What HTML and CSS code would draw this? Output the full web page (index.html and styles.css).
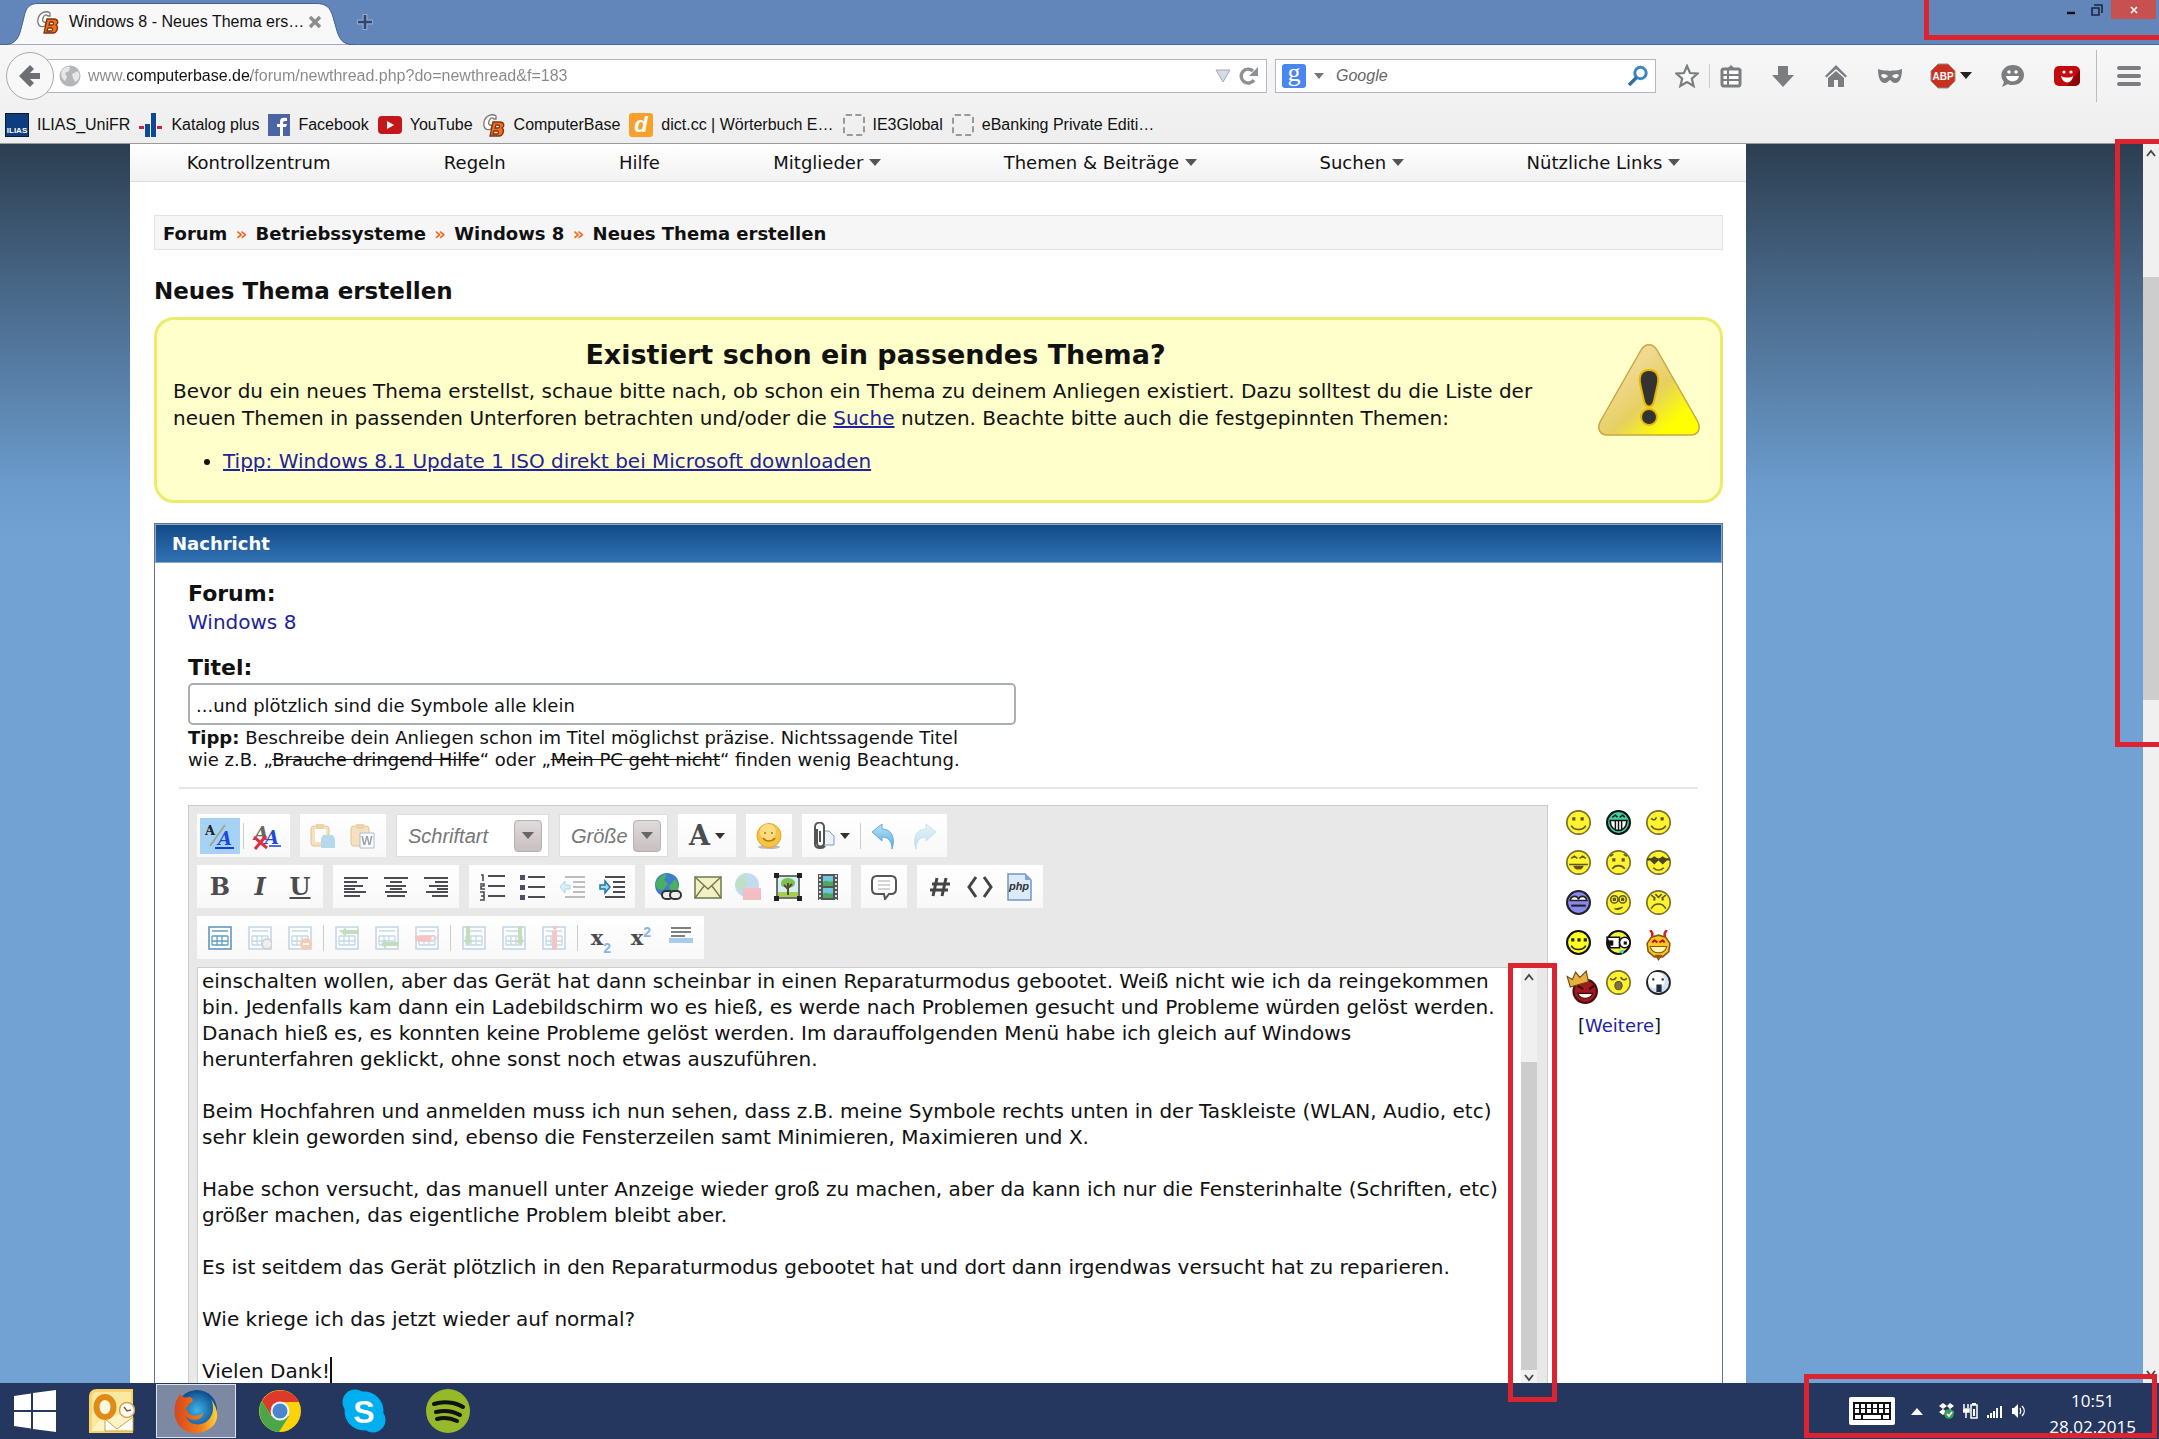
FILE: index.html
```html
<!DOCTYPE html>
<html lang="de">
<head>
    <meta charset="UTF-8">
    <meta name="viewport" content="width=device-width, initial-scale=1.0">
    <title>Windows 8 - Neues Thema erstellen</title>
    <link rel="stylesheet" href="styles.css">
</head>
<body>

    <!-- shared shapes -->
    <svg class="defs" aria-hidden="true">
        <defs>
            <linearGradient id="warnFill" x1="0" y1="0" x2="1" y2="1">
                <stop offset="0.3" stop-color="#f0d890"/>
                <stop offset="0.55" stop-color="#e6d060"/>
                <stop offset="0.8" stop-color="#ffff00"/>
            </linearGradient>
            <linearGradient id="arrowBlue" x1="0" y1="0" x2="0" y2="1">
                <stop offset="0" stop-color="#b8e4f8"/>
                <stop offset="1" stop-color="#5aa8d8"/>
            </linearGradient>
            <radialGradient id="foxGlobe">
                <stop offset="0" stop-color="#3fb4e8"/>
                <stop offset="1" stop-color="#0b4a8c"/>
            </radialGradient>
            <linearGradient id="foxFur" x1="0" y1="0" x2="1" y2="0">
                <stop offset="0" stop-color="#d8451c"/>
                <stop offset="0.6" stop-color="#ef7a1c"/>
                <stop offset="1" stop-color="#fbd437"/>
            </linearGradient>
            <symbol id="cb" viewBox="0 0 24 24">
                <path d="M14 3C10 0 3 3 2 9s2 9 7 7l1-4c-3 1-4-1-3-4s3-4 5-2l2 0z" fill="#fff" stroke="#777" stroke-width="1.3"/>
                <path d="M11 9h7c4 0 5 4 2 6 3 2 1 8-3 8H8zM14 12l-1 3h3c2 0 2-3 0-3zM12 18l-1 3h4c2 0 2-3 0-3z" fill="#f0701c" stroke="#7a3510" stroke-width="1.3"/>
            </symbol>
            <symbol id="face" viewBox="0 0 24 24">
                <circle cx="12" cy="12" r="11.2" fill="#fff22e" stroke="#77702a" stroke-width="1.6"/>
            </symbol>
            <symbol id="grid" viewBox="0 0 24 24">
                <path d="M1 1h22v22H1z" fill="#fff" stroke="#5a8fc0" stroke-width="1.5"/>
                <path d="M4 5h16M4 10h16M4 15h16M4 19h16M4 10v9M9 10v9M14 10v9M20 10v9" fill="none" stroke="#5f9ec4" stroke-width="1.3"/>
            </symbol>
        </defs>
    </svg>

    <header class="browser">
        <div class="titlebar">
            <svg class="tab-shape" viewBox="0 0 356 42" aria-hidden="true">
                <path d="M0 42C14 42 18 38 21 26L24 14C26 4 30 0.5 38 0.5H316C326 0.5 330 4 333 14L337 28C340 38 344 42 356 42z" fill="#f8f8f8" stroke="#42608f"/>
            </svg>
            <a class="tab" href="#">
                <svg class="ico24" viewBox="0 0 24 24"><use href="#cb"/></svg>
                <span>Windows 8 - Neues Thema ers…</span>
            </a>
            <button class="tab-close" aria-label="Tab schließen">
                <svg width="14" height="14" viewBox="0 0 14 14"><path d="M2 2l10 10M12 2L2 12" stroke="#8c8c8c" stroke-width="3.4"/></svg>
            </button>
            <button class="tab-new" aria-label="Neuer Tab">
                <svg width="18" height="18" viewBox="0 0 18 18"><path d="M9 1v16M1 9h16" stroke="#8fa9d4" stroke-width="5"/><path d="M9 2v14M2 9h14" stroke="#33476b" stroke-width="2.6"/></svg>
            </button>
            <div class="window-buttons">
                <button aria-label="Minimieren"><svg width="12" height="12" viewBox="0 0 12 12"><path d="M2 9h8" stroke="#111" stroke-width="2.4"/></svg></button>
                <button aria-label="Verkleinern"><svg width="12" height="12" viewBox="0 0 12 12"><path d="M1 4h7v7H1zM3 1h8v8" fill="none" stroke="#1a2742" stroke-width="1.6"/></svg></button>
                <button class="close" aria-label="Schließen"><svg width="10" height="10" viewBox="0 0 10 10"><path d="M2 2l6 6M8 2L2 8" stroke="#fff" stroke-width="1.6"/></svg></button>
            </div>
        </div>

        <div class="toolbar">
            <button class="back" aria-label="Zurück">
                <svg width="24" height="24" viewBox="0 0 24 24"><path d="M12 1l4 4-4 4h10v6H12l4 4-4 4L1 12z" fill="#6d6f73"/></svg>
            </button>
            <div class="url">
                <svg width="22" height="22" viewBox="0 0 22 22"><circle cx="11" cy="11" r="10.5" fill="#b4b6b8"/><path d="M3 5c3-3 6-4 8-3l-1 4-4 2 2 4-2 4c-3-2-5-7-3-11zM13 9l6-3c2 3 2 6 0 9l-3 2-2-4z" fill="#e6e7e8"/></svg>
                <input type="text" aria-label="Adresse" value="www.computerbase.de/forum/newthread.php?do=newthread&amp;f=183">
                <svg width="16" height="14" viewBox="0 0 16 14"><path d="M1 1h14L8 13z" fill="#d6dae2" stroke="#a3a9b6"/></svg>
                <button aria-label="Neu laden">
                    <svg width="22" height="20" viewBox="0 0 22 20"><path d="M16 14a7 7 0 1 1-1-9" fill="none" stroke="#8d9095" stroke-width="3.4"/><path d="M20 1v9h-9z" fill="#8d9095"/></svg>
                </button>
            </div>
            <div class="search">
                <span class="g-logo">g</span>
                <svg width="10" height="6" viewBox="0 0 10 6"><path d="M0 0h10L5 6z" fill="#777"/></svg>
                <input type="search" aria-label="Suche" placeholder="Google">
                <svg width="22" height="22" viewBox="0 0 22 22"><circle cx="13.500" cy="8" r="5.700" fill="#fff" stroke="#3f86bf" stroke-width="3"/><path d="M9.500 12.500L2 20" stroke="#2f6da6" stroke-width="3.400"/></svg>
            </div>
            <div class="tools">
                <button aria-label="Lesezeichen"><svg width="24" height="24" viewBox="0 0 24 24"><path d="M12 2l3 7 7.500.6-5.700 5 1.800 7.400-6.600-4-6.600 4 1.800-7.400-5.700-5L9 9z" fill="#fff" stroke="#7b7d80" stroke-width="2.200"/></svg></button>
                <span class="thin"></span>
                <button aria-label="Lesezeichenliste"><svg width="22" height="24" viewBox="0 0 22 24"><path d="M3 5h16a2 2 0 0 1 1 1v14a2 2 0 0 1-1 2H3a2 2 0 0 1-1-2V6a2 2 0 0 1 1-1z" fill="#fff" stroke="#7b7d80" stroke-width="3"/><path d="M7 5l4-4 4 4zM3 10h16v2H3zM3 15h16v2H3zM7 6h2v15H7z" fill="#7b7d80"/></svg></button>
                <button class="g1" aria-label="Downloads"><svg width="22" height="24" viewBox="0 0 22 24"><path d="M6 2h10v9h6L11 23 0 11h6z" fill="#7b7d80"/></svg></button>
                <button class="g1" aria-label="Startseite"><svg width="24" height="24" viewBox="0 0 24 24"><path d="M12 1l11 11-1.500 1.500L12 5l-9.500 8.500L1 12zM12 7l8 7v9h-6v-7h-4v7H4v-9z" fill="#7b7d80"/></svg></button>
                <button class="g1" aria-label="Privater Modus"><svg width="24" height="16" viewBox="0 0 24 16"><path fill-rule="evenodd" d="M0 1c4 2 9 1 12 2 3-1 8 0 12-2 0 8-2 14-7 14-3 0-4-3-5-3s-2 3-5 3C2 15 0 9 0 1zM3 7c1 4 5 4 7 1-2-2-5-3-7-1zM21 7c-1 4-5 4-7 1 2-2 5-3 7-1z" fill="#7b7d80"/></svg></button>
                <button class="g1 abp" aria-label="Adblock Plus"><svg width="26" height="26" viewBox="0 0 26 26"><path d="M8 1h10l7 7v10l-7 7H8l-7-7V8z" fill="#c8301f" stroke="#9b8884"/><text x="13" y="17" text-anchor="middle" class="abp-text">ABP</text></svg><svg width="12" height="7" viewBox="0 0 12 7"><path d="M0 0h12L6 7z" fill="#222"/></svg></button>
                <button class="g1" aria-label="Chat"><svg width="24" height="24" viewBox="0 0 24 24"><path d="M13 1c6 0 11 4 11 10s-5 10-11 10c-2 0-4 0-5-1l-6 3 2-5C-2 11 3 1 13 1z" fill="#7b7d80"/><circle cx="9" cy="8" r="1.800" fill="#fff"/><circle cx="16" cy="8" r="1.800" fill="#fff"/><path d="M6 12h13c-1 7-12 7-13 0z" fill="#fff"/></svg></button>
                <button class="g1" aria-label="YouTube Erweiterung"><svg width="26" height="20" viewBox="0 0 26 20"><rect x="0" y="0" width="26" height="20" rx="5" fill="#c20a10"/><path d="M13 20h8a5 5 0 0 0 5-5V4z" fill="#8e0004"/><circle cx="10" cy="6" r="1.600" fill="#fff"/><circle cx="17" cy="6" r="1.600" fill="#fff"/><path d="M7 10c4 2 9 2 12 0-1 8-10 9-12 0z" fill="#fff"/></svg></button>
                <span class="tall"></span>
                <button aria-label="Menü"><svg width="24" height="20" viewBox="0 0 24 20"><path d="M2 2h20M2 10h20M2 18h20" stroke="#7b7d80" stroke-width="4" stroke-linecap="round"/></svg></button>
            </div>
        </div>

        <nav class="bookmarks">
            <a href="#"><svg class="ico24" viewBox="0 0 24 24"><path d="M0 0h24v24H0z" fill="#0d1a33"/><path d="M1 1h22v22H1z" fill="#0d3c80"/><text x="12" y="20" text-anchor="middle" class="ilias">ILIAS</text></svg>ILIAS_UniFR</a>
            <a href="#"><svg class="ico24" viewBox="0 0 24 24"><path d="M12 0h5v24h-5zM6 11h5v13H6z" fill="#0d4a94"/><path d="M0 13h5v3H0zM18 13h5v3h-5z" fill="#cc2244"/></svg>Katalog plus</a>
            <a href="#"><svg class="ico22" viewBox="0 0 22 22"><path d="M0 0h22v22H0z" fill="#4a64a4"/><path d="M12 22v-9H9v-3h3V8c0-4 2-5 7-4v3c-3 0-4 0-4 2v1h4l-1 3h-3v9z" fill="#fff"/></svg>Facebook</a>
            <a href="#"><svg class="ico24" viewBox="0 0 24 24"><rect y="3" width="24" height="18" rx="4" fill="#c4171c"/><path d="M9 8l7 4-7 4z" fill="#fff"/></svg>YouTube</a>
            <a href="#"><svg class="ico24" viewBox="0 0 24 24"><use href="#cb"/></svg>ComputerBase</a>
            <a href="#"><svg class="ico24" viewBox="0 0 24 24"><rect width="24" height="24" rx="3" fill="#f9a02c"/><text x="12" y="19" text-anchor="middle" class="dict">d</text></svg>dict.cc | Wörterbuch E…</a>
            <a href="#"><span class="no-icon"></span>IE3Global</a>
            <a href="#"><span class="no-icon"></span>eBanking Private Editi…</a>
        </nav>
    </header>

    <div class="viewport">
        <main class="page">
            <nav class="sitenav">
                <a href="#">Kontrollzentrum</a>
                <a href="#">Regeln</a>
                <a href="#">Hilfe</a>
                <a class="drop" href="#">Mitglieder</a>
                <a class="drop" href="#">Themen &amp; Beiträge</a>
                <a class="drop" href="#">Suchen</a>
                <a class="drop" href="#">Nützliche Links</a>
            </nav>

            <div class="content">
                <div class="breadcrumb">
                    <a href="#">Forum</a> <i>»</i> <a href="#">Betriebssysteme</a> <i>»</i> <a href="#">Windows 8</a> <i>»</i> <span>Neues Thema erstellen</span>
                </div>

                <h1>Neues Thema erstellen</h1>

                <section class="notice">
                    <div class="notice-text">
                        <h2>Existiert schon ein passendes Thema?</h2>
                        <p>Bevor du ein neues Thema erstellst, schaue bitte nach, ob schon ein Thema zu deinem Anliegen existiert. Dazu solltest du die Liste der neuen Themen in passenden Unterforen betrachten und/oder die <a href="#">Suche</a> nutzen. Beachte bitte auch die festgepinnten Themen:</p>
                        <ul>
                            <li><a href="#">Tipp: Windows 8.1 Update 1 ISO direkt bei Microsoft downloaden</a></li>
                        </ul>
                    </div>
                    <svg width="102" height="94" viewBox="0 0 102 94" aria-hidden="true">
                        <path d="M43 6c4-7 12-7 16 0l41 72c3 7 0 13-7 13H9c-7 0-10-6-7-13z" fill="url(#warnFill)" stroke="#c9a640" stroke-width="1.500"/>
                        <path d="M51 27c-7 0-9 5-8 12l4 18c2 6 6 6 8 0l4-18c1-7-1-12-8-12z" fill="#333" stroke="#e8b800" stroke-width="4" paint-order="stroke"/>
                        <circle cx="51" cy="73" r="7" fill="#333" stroke="#e8b800" stroke-width="4" paint-order="stroke"/>
                    </svg>
                </section>

                <form class="panel">
                    <h3>Nachricht</h3>
                    <div class="panel-body">
                        <div class="fields">
                            <div class="label">Forum:</div>
                            <a class="forum-link" href="#">Windows 8</a>
                            <label class="label" for="title">Titel:</label>
                            <input class="title-input" type="text" id="title" value="...und plötzlich sind die Symbole alle klein">
                            <p class="hint"><b>Tipp:</b> Beschreibe dein Anliegen schon im Titel möglichst präzise. Nichtssagende Titel<br>wie z.B. „<s>Brauche dringend Hilfe</s>“ oder „<s>Mein PC geht nicht</s>“ finden wenig Beachtung.</p>
                        </div>
                        <hr>

                        <div class="compose">
                            <div class="editor">
                                <div class="row">
                                    <div class="group">
                                        <button type="button" class="active" aria-label="Editor wechseln"><svg width="32" height="28" viewBox="0 0 32 28"><text x="1" y="13" class="a-small">A</text><text x="14" y="23" class="a-blue">A</text><path d="M6 24L21 3" stroke="#a0a890" stroke-width="2"/><path d="M11 26h19" stroke="#1540d8" stroke-width="2"/></svg></button>
                                        <i class="sep"></i>
                                        <button type="button" aria-label="Formatierung entfernen"><svg width="32" height="30" viewBox="0 0 32 30"><text x="3" y="19" class="a-grey">A</text><text x="14" y="23" class="a-blue">A</text><path d="M3 16l13 11M15 15L4 28" stroke="#e03040" stroke-width="3"/><path d="M18 25h12" stroke="#1540d8" stroke-width="1.500"/></svg></button>
                                    </div>
                                    <div class="group faded">
                                        <button type="button" aria-label="Einfügen"><svg width="26" height="26" viewBox="0 0 26 26"><rect x="1" y="3" width="18" height="20" rx="3" fill="#f4cf98" stroke="#d49c58"/><rect x="5" y="6" width="11" height="13" fill="#fff"/><path d="M6 1h8v5H6z" fill="#e0b878"/><path d="M13 12h10l2 4v9H11v-9z" fill="#8cc4e4"/></svg></button>
                                        <button type="button" aria-label="Aus Word einfügen"><svg width="26" height="26" viewBox="0 0 26 26"><rect x="1" y="3" width="18" height="20" rx="3" fill="#f4cf98" stroke="#d49c58"/><path d="M6 1h8v5H6z" fill="#e0b878"/><path d="M10 10h14v15H10z" fill="#fff" stroke="#7f92bb"/><text x="17" y="22" text-anchor="middle" class="word">W</text></svg></button>
                                    </div>
                                    <div class="group combo font-combo"><select aria-label="Schriftart"><option>Schriftart</option></select><span class="knob"></span></div>
                                    <div class="group combo size-combo"><select aria-label="Größe"><option>Größe</option></select><span class="knob"></span></div>
                                    <div class="group"><button type="button" class="wide letter" aria-label="Textfarbe">A<span class="tri"></span></button></div>
                                    <div class="group"><button type="button" aria-label="Smiley"><svg width="26" height="26" viewBox="0 0 26 26"><ellipse cx="13" cy="24" rx="11" ry="2" fill="#bbb"/><circle cx="13" cy="12.500" r="12" fill="#f6c445" stroke="#e2a52c"/><circle cx="12" cy="9" r="8" fill="#fbdc80"/><path d="M7 15c3 4 9 4 12 0M9 9v2M16 9v2" fill="none" stroke="#b17a18" stroke-width="1.600"/></svg></button></div>
                                    <div class="group">
                                        <button type="button" class="wide" aria-label="Anhang"><svg width="22" height="28" viewBox="0 0 22 28"><path d="M11 9h5l5 5v9H11z" fill="#edf2fa" stroke="#7b9abf"/><path d="M4 7v14a3 3 0 0 0 7 0V5a4 4 0 0 0-9 0v17c0 5 8 5 10 2M7 9v11" fill="none" stroke="#555" stroke-width="2"/></svg><span class="tri"></span></button>
                                        <i class="sep"></i>
                                        <button type="button" aria-label="Rückgängig"><svg width="26" height="28" viewBox="0 0 26 28"><path d="M1 10l10-8v5c9 0 14 8 10 20 0-8-4-12-10-12v4z" fill="url(#arrowBlue)" stroke="#63aede"/></svg></button>
                                        <button type="button" class="pale" aria-label="Wiederherstellen"><svg width="26" height="28" viewBox="0 0 26 28"><path d="M25 10L15 2v5C6 7 1 15 5 27c0-8 4-12 10-12v4z" fill="url(#arrowBlue)" stroke="#63aede"/></svg></button>
                                    </div>
                                </div>

                                <div class="row">
                                    <div class="group letters">
                                        <button type="button" aria-label="Fett"><b>B</b></button>
                                        <button type="button" aria-label="Kursiv"><em>I</em></button>
                                        <button type="button" aria-label="Unterstrichen"><u>U</u></button>
                                    </div>
                                    <div class="group">
                                        <button type="button" aria-label="Linksbündig"><svg width="24" height="20" viewBox="0 0 24 20"><path d="M0 1h24M0 5h13M0 9h19M0 12h11M0 15h22M0 19h16" stroke="#4b4b50" stroke-width="2"/></svg></button>
                                        <button type="button" aria-label="Zentriert"><svg width="24" height="20" viewBox="0 0 24 20"><path d="M0 1h24M6 5h12M2 9h20M6 12h12M1 15h22M3 19h18" stroke="#4b4b50" stroke-width="2"/></svg></button>
                                        <button type="button" aria-label="Rechtsbündig"><svg width="24" height="20" viewBox="0 0 24 20"><path d="M0 1h24M11 5h13M5 9h19M13 12h11M2 15h22M8 19h16" stroke="#4b4b50" stroke-width="2"/></svg></button>
                                    </div>
                                    <div class="group">
                                        <button type="button" aria-label="Nummerierte Liste"><svg width="26" height="28" viewBox="0 0 26 28"><path d="M9 3h17M9 13h17M9 23h17" stroke="#4b4b50" stroke-width="2"/><path d="M2 2h2v6M1 11h4v2H2v3h4M1 19h4v8H1M2 23h3" fill="none" stroke="#4b4b50" stroke-width="1.600"/></svg></button>
                                        <button type="button" aria-label="Liste"><svg width="26" height="26" viewBox="0 0 26 26"><path d="M9 3h17M9 13h17M9 23h17" stroke="#4b4b50" stroke-width="2"/><path d="M1 1h5v5H1zM1 11h5v5H1zM1 21h5v5H1z" fill="#4d4f68"/></svg></button>
                                        <button type="button" class="pale" aria-label="Einzug verkleinern"><svg width="26" height="24" viewBox="0 0 26 24"><path d="M6 2h20M14 7h12M14 12h12M14 17h12M6 22h20" stroke="#4b4b50" stroke-width="2"/><path d="M1 12l5-6v4h5v4H6v4z" fill="#9fdcf4" stroke="#2f8ab8"/></svg></button>
                                        <button type="button" aria-label="Einzug vergrößern"><svg width="26" height="24" viewBox="0 0 26 24"><path d="M6 2h20M14 7h12M14 12h12M14 17h12M6 22h20" stroke="#4b4b50" stroke-width="2"/><path d="M11 12L6 6v4H1v4h5v4z" fill="#9fdcf4" stroke="#1f78a8" stroke-width="1.500"/></svg></button>
                                    </div>
                                    <div class="group">
                                        <button type="button" aria-label="Link"><svg width="28" height="28" viewBox="0 0 28 28"><circle cx="13" cy="12" r="12" fill="#3f7fc8"/><path d="M1 12c2-7 8-11 12-11l-3 6 4 4-5 6-5-1zM15 13l6-7c4 4 4 9 2 13l-6-1z" fill="#48b060"/><rect x="8" y="18" width="11" height="8" rx="4" fill="#eee" stroke="#333" stroke-width="2"/><rect x="16" y="18" width="11" height="8" rx="4" fill="#eee" stroke="#333" stroke-width="2"/></svg></button>
                                        <button type="button" aria-label="E-Mail"><svg width="28" height="24" viewBox="0 0 28 24"><path d="M1 2h26v21H1z" fill="#f3f0c4" stroke="#6f7750" stroke-width="1.500"/><path d="M1 2l13 12L27 2M1 23l9-12M27 23l-9-12" fill="none" stroke="#6f7750" stroke-width="1.300"/></svg></button>
                                        <button type="button" class="pale" aria-label="Link entfernen"><svg width="28" height="28" viewBox="0 0 28 28"><circle cx="13" cy="12" r="12" fill="#5f9fd8"/><path d="M1 12c2-7 8-11 12-11l-3 6 4 4-5 6-5-1z" fill="#48b060"/><path d="M9 15h18v12H9z" fill="#e85060"/></svg></button>
                                        <button type="button" aria-label="Grafik"><svg width="28" height="28" viewBox="0 0 28 28"><path d="M3 3h22v22H3z" fill="#d4f0f4" stroke="#444" stroke-width="1.500"/><path d="M4 19h20v5H4z" fill="#a8cc50"/><path d="M7 11c0-4 3-6 7-6s8 3 7 6-4 4-7 3-7 1-7-3z" fill="#7fbf5a"/><path d="M14 10v12M14 16l-4-4M14 15l4-4" stroke="#5a4a28" stroke-width="2"/><path d="M0 0h5v5H0zM23 0h5v5h-5zM0 23h5v5H0zM23 23h5v5h-5z" fill="#222"/></svg></button>
                                        <button type="button" aria-label="Video"><svg width="22" height="26" viewBox="0 0 22 26"><path d="M1 0h20v26H1z" fill="#555"/><path d="M6 2h10v10H6zM6 14h10v10H6z" fill="#70c8e0"/><path d="M6 8c4-3 6 1 10-1v5H6zM6 20c4-3 6 1 10-1v5H6z" fill="#4ca860"/><path d="M3 1v25M19 1v25" stroke="#ddd" stroke-width="2" stroke-dasharray="2 2"/></svg></button>
                                    </div>
                                    <div class="group">
                                        <button type="button" aria-label="Zitat"><svg width="26" height="26" viewBox="0 0 26 26"><path d="M6 2h14c3 0 5 2 5 5v8c0 3-2 5-5 5h-2l-4 5-1-5H6c-3 0-5-2-5-5V7c0-3 2-5 5-5z" fill="#fff" stroke="#555" stroke-width="2"/><path d="M7 7h12M7 11h12M7 15h12" stroke="#aaa"/></svg></button>
                                    </div>
                                    <div class="group">
                                        <button type="button" aria-label="Code"><svg width="22" height="22" viewBox="0 0 22 22"><path d="M8 2L4 20M17 2l-4 18M3 8h18M1 14h18" stroke="#444" stroke-width="3"/></svg></button>
                                        <button type="button" aria-label="HTML"><svg width="26" height="22" viewBox="0 0 26 22"><path d="M9 1L2 11l7 10M17 1l7 10-7 10" fill="none" stroke="#444" stroke-width="3"/></svg></button>
                                        <button type="button" aria-label="PHP"><svg width="26" height="28" viewBox="0 0 26 28"><path d="M1 1h17l6 6v20H1z" fill="#dbe9f8" stroke="#6f97c4" stroke-width="1.500"/><path d="M18 1v6h6z" fill="#7fa6d4"/><text x="12" y="17" text-anchor="middle" class="php">php</text></svg></button>
                                    </div>
                                </div>

                                <div class="row">
                                    <div class="group tables">
                                        <button type="button" aria-label="Tabelle"><svg class="ico24"><use href="#grid"/></svg></button>
                                        <button type="button" class="pale" aria-label="Tabelleneigenschaften"><svg class="ico24" viewBox="0 0 24 24"><use href="#grid"/><circle cx="19" cy="18" r="5" fill="#ddd" stroke="#888" stroke-width="2"/></svg></button>
                                        <button type="button" class="pale" aria-label="Tabelle löschen"><svg class="ico24" viewBox="0 0 24 24"><use href="#grid"/><circle cx="18" cy="18" r="6" fill="#f07838"/><path d="M15 18h6" stroke="#fff" stroke-width="2"/></svg></button>
                                        <i class="sep"></i>
                                        <button type="button" class="pale" aria-label="Zeile davor"><svg class="ico24" viewBox="0 0 24 24"><use href="#grid"/><path d="M6 6l5-5v3h13v4H11v3z" fill="#58a848"/></svg></button>
                                        <button type="button" class="pale" aria-label="Zeile danach"><svg class="ico24" viewBox="0 0 24 24"><use href="#grid"/><path d="M6 18l5-5v3h13v4H11v3z" fill="#58a848"/></svg></button>
                                        <button type="button" class="pale" aria-label="Zeile löschen"><svg class="ico24" viewBox="0 0 24 24"><use href="#grid"/><path d="M0 10h16v5H0zM17 9l7 6M24 9l-7 6" fill="#f06060" stroke="#f06060"/></svg></button>
                                        <i class="sep"></i>
                                        <button type="button" class="pale" aria-label="Spalte davor"><svg class="ico24" viewBox="0 0 24 24"><use href="#grid"/><path d="M6 19l-5-5h3V0h4v14h3z" fill="#58a848"/></svg></button>
                                        <button type="button" class="pale" aria-label="Spalte danach"><svg class="ico24" viewBox="0 0 24 24"><use href="#grid"/><path d="M18 19l-5-5h3V0h4v14h3z" fill="#58a848"/></svg></button>
                                        <button type="button" class="pale" aria-label="Spalte löschen"><svg class="ico24" viewBox="0 0 24 24"><use href="#grid"/><path d="M10 5h5v19h-5zM9 0h7l-3 5z" fill="#f06060"/></svg></button>
                                        <i class="sep"></i>
                                        <button type="button" class="script low" aria-label="Tiefgestellt">x<small>2</small></button>
                                        <button type="button" class="script high" aria-label="Hochgestellt">x<small>2</small></button>
                                        <button type="button" aria-label="Linie"><svg class="ico24" viewBox="0 0 24 24"><path d="M2 2h20M2 6h20M2 10h14" stroke="#555" stroke-width="1.500"/><path d="M0 12h24v5H0z" fill="#a8ccf0"/></svg></button>
                                    </div>
                                </div>

                                <div class="writing">
                                    <textarea aria-label="Nachricht" wrap="off">einschalten wollen, aber das Gerät hat dann scheinbar in einen Reparaturmodus gebootet. Weiß nicht wie ich da reingekommen
bin. Jedenfalls kam dann ein Ladebildschirm wo es hieß, es werde nach Problemen gesucht und Probleme würden gelöst werden.
Danach hieß es, es konnten keine Probleme gelöst werden. Im darauffolgenden Menü habe ich gleich auf Windows
herunterfahren geklickt, ohne sonst noch etwas auszuführen.

Beim Hochfahren und anmelden muss ich nun sehen, dass z.B. meine Symbole rechts unten in der Taskleiste (WLAN, Audio, etc)
sehr klein geworden sind, ebenso die Fensterzeilen samt Minimieren, Maximieren und X.

Habe schon versucht, das manuell unter Anzeige wieder groß zu machen, aber da kann ich nur die Fensterinhalte (Schriften, etc)
größer machen, das eigentliche Problem bleibt aber.

Es ist seitdem das Gerät plötzlich in den Reparaturmodus gebootet hat und dort dann irgendwas versucht hat zu reparieren.

Wie kriege ich das jetzt wieder auf normal?

Vielen Dank!</textarea>
                                    <span class="caret"></span>
                                    <div class="scrollbar inner">
                                        <svg width="10" height="8" viewBox="0 0 10 8"><path d="M1 7l4-5 4 5" fill="none" stroke="#444" stroke-width="1.800"/></svg>
                                        <span class="thumb"></span>
                                        <svg width="10" height="8" viewBox="0 0 10 8"><path d="M1 1l4 5 4-5" fill="none" stroke="#444" stroke-width="1.800"/></svg>
                                    </div>
                                </div>
                            </div>

                            <div class="smileys">
                                <div class="smiley-grid">
                                    <svg viewBox="0 0 24 24"><use href="#face"/><path d="M6 7h3v3H6zM14 7h3v3h-3z" fill="#5a5524"/><path d="M5 15c3 5 11 5 14 0" fill="none" stroke="#5a5524" stroke-width="1.500"/></svg>
                                    <svg viewBox="0 0 24 24"><circle cx="12" cy="12" r="11" fill="#3fd0a0" stroke="#111" stroke-width="2"/><path d="M4 10h16c0 13-16 13-16 0z" fill="#fff" stroke="#111" stroke-width="1.500"/><path d="M9 10v9M12 10v10M15 10v9M6 7l3-2 2 2M13 7l3-2 2 2" fill="none" stroke="#111" stroke-width="1.400"/></svg>
                                    <svg viewBox="0 0 24 24"><use href="#face"/><path d="M14 7h3v3h-3z" fill="#5a5524"/><path d="M5 8c2 2 4 2 5-1M5 15c3 5 11 5 14 0" fill="none" stroke="#5a5524" stroke-width="1.500"/></svg>
                                    <svg viewBox="0 0 24 24"><use href="#face"/><path d="M5 8l3-2 3 2M13 8l3-2 3 2M3 14h18" fill="none" stroke="#5a5524" stroke-width="1.500"/><path d="M7 15h10c-1 5-9 5-10 0z" fill="#6a4a20"/></svg>
                                    <svg viewBox="0 0 24 24"><use href="#face"/><path d="M6 8h3v3H6zM15 8h3v3h-3z" fill="#5a5524"/><path d="M4 6l3-2M17 4l3 2M6 18c3-4 9-4 12 0" fill="none" stroke="#5a5524" stroke-width="1.500"/></svg>
                                    <svg viewBox="0 0 24 24"><use href="#face"/><path d="M1 8h22v2h-3l-4 4-4-4-4 4-4-4H1zM5 8l3-2 3 2zM13 8l3-2 3 2z" fill="#4a461f"/><path d="M7 17c3 3 7 3 10 0" fill="none" stroke="#5a5524" stroke-width="1.500"/></svg>
                                    <svg viewBox="0 0 24 24"><circle cx="12" cy="12" r="11" fill="#8888ee" stroke="#222" stroke-width="2"/><path d="M4 10c1-5 7-5 8-1 1-4 7-4 8 1z" fill="#fff" stroke="#222" stroke-width="1.500"/><path d="M5 15h14" stroke="#222" stroke-width="2"/></svg>
                                    <svg viewBox="0 0 24 24"><use href="#face"/><circle cx="8" cy="9" r="3.500" fill="none" stroke="#5a5524" stroke-width="1.500"/><circle cx="16" cy="9" r="3.500" fill="none" stroke="#5a5524" stroke-width="1.500"/><path d="M7 8h2v2H7zM15 8h2v2h-2zM8 18c3 1 6 1 8-2" fill="#5a5524" stroke="#5a5524"/></svg>
                                    <svg viewBox="0 0 24 24"><use href="#face"/><path d="M5 5l4 3M19 5l-4 3M9 4l3 3 3-3M5 18c3-6 11-6 14 0" fill="none" stroke="#5a5524" stroke-width="1.500"/><path d="M7 8h2v2H7zM15 8h2v2h-2z" fill="#5a5524"/></svg>
                                    <svg viewBox="0 0 24 24"><circle cx="12" cy="12" r="11" fill="#ffff20" stroke="#111" stroke-width="2"/><path d="M5 8h3v3H5zM11 8h3v3h-3zM17 8h3v3h-3z" fill="#222"/><path d="M5 15c3 5 11 5 14 0" fill="none" stroke="#222" stroke-width="1.500"/></svg>
                                    <svg viewBox="0 0 24 24"><circle cx="12" cy="12" r="11" fill="#f4f43c" stroke="#111" stroke-width="2"/><path d="M1 7h12v10H4z" fill="#fff" stroke="#111" stroke-width="1.500"/><path d="M1 10h6v5H1z" fill="#111"/><circle cx="18" cy="12" r="5" fill="#fff" stroke="#111" stroke-width="1.500"/><path d="M17 11h3v3h-3z" fill="#111"/><path d="M12 20l6-1-2 4z" fill="#40d8c0"/></svg>
                                    <svg class="devil" viewBox="0 0 24 30"><path d="M6 8V3L4 0M18 8V3l2-3" fill="none" stroke="#e02020" stroke-width="2.500"/><path d="M5 7l7-2 7 2 4 6-1 8-6 5H8l-6-5-1-8z" fill="#f8c820" stroke="#8a5410" stroke-width="1.500"/><path d="M6 12l2-2 3 2M13 12l3-2 2 2" fill="none" stroke="#c01010" stroke-width="2"/><path d="M4 16h16c-2 8-14 8-16 0z" fill="#fff8b0" stroke="#8a5410"/><path d="M8 24h8l-4 6z" fill="#a05810"/></svg>
                                    <svg class="king" viewBox="0 0 30 32"><circle cx="18" cy="20" r="11" fill="#a01820" stroke="#401010" stroke-width="2"/><path d="M1 6l5 3 3-7 4 5 6-6 2 10L4 16z" fill="#e8b040" stroke="#6a4410"/><path d="M11 15l5 3M26 15l-4 3" stroke="#300" stroke-width="2"/><path d="M11 22h14c-2 6-12 6-14 0z" fill="#fff" stroke="#400"/></svg>
                                    <svg viewBox="0 0 24 24"><use href="#face"/><path d="M4 8c2 2 4 2 6-1M14 7c2 3 4 3 6 1" fill="none" stroke="#5a5524" stroke-width="1.500"/><ellipse cx="12" cy="15" rx="3.500" ry="4" fill="#7a7250" stroke="#5a5524"/></svg>
                                    <svg viewBox="0 0 24 24"><circle cx="12" cy="12" r="11" fill="#d4e0f4" stroke="#222" stroke-width="1.800"/><circle cx="10" cy="10" r="8" fill="#fff"/><path d="M6 8h2v2H6zM15 8h2v2h-2zM10 14h5v7h-5z" fill="#1c2c40"/></svg>
                                </div>
                                <div class="more">[<a href="#">Weitere</a>]</div>
                            </div>
                        </div>
                    </div>
                </form>
            </div>
        </main>
        <div class="scrollbar outer">
            <svg width="10" height="8" viewBox="0 0 10 8"><path d="M1 7l4-5 4 5" fill="none" stroke="#444" stroke-width="1.800"/></svg>
            <span class="thumb"></span>
            <svg width="10" height="8" viewBox="0 0 10 8"><path d="M1 1l4 5 4-5" fill="none" stroke="#444" stroke-width="1.800"/></svg>
        </div>
    </div>

    <footer class="taskbar">
        <button aria-label="Start"><svg width="42" height="42" viewBox="0 0 42 42"><path d="M0 6l17-2.500V20H0zM19 3l23-3v20H19zM0 22h17v16.500L0 36zM19 22h23v20l-23-3z" fill="#fff"/></svg></button>
        <button aria-label="Outlook"><svg width="46" height="44" viewBox="0 0 46 44"><path d="M8 0h36v44H0V8C0 3 3 0 8 0z" fill="#f8d468"/><path d="M3 8c0-3 2-5 5-5h34v38H3z" fill="#fce9a0"/><path d="M2 42l14-16h28v16z" fill="#fff3c8"/><path d="M16 30l12 10 16-12v14H16z" fill="#fff" stroke="#d8a030"/><ellipse cx="16" cy="18" rx="8.500" ry="10" fill="#fff8e0" stroke="#e08a18" stroke-width="6"/><circle cx="38" cy="21" r="7.500" fill="#fff" stroke="#d8a048" stroke-width="1.500"/><path d="M35 18l3 4 4-1" fill="none" stroke="#8a5a20" stroke-width="1.500"/></svg></button>
        <button class="current" aria-label="Firefox"><svg width="44" height="44" viewBox="0 0 44 44"><circle cx="23" cy="21" r="20" fill="url(#foxGlobe)"/><path d="M2 12c2-3 3-5 4-7 2 3 5 4 9 3 3 0 5 3 3 5l-3 2c0 2-2 3-3 4 2 8 10 10 17 5-1 8-13 9-17 3 2 8 12 11 20 6 7-5 9-14 5-23 9 12 8 24-2 30C21 49 4 43 1 27c-1-6 0-11 1-15z" fill="url(#foxFur)"/></svg></button>
        <button aria-label="Chrome"><svg width="42" height="42" viewBox="0 0 42 42"><circle cx="21" cy="21" r="21" fill="#fcd209"/><path d="M3 11A21 21 0 0 1 40 12H21l-9 14z" fill="#dd3a2c"/><path d="M3 11A21 21 0 0 0 20 42l10-16H12z" fill="#4aa749"/><circle cx="21" cy="21" r="9.500" fill="#f4f4f4"/><circle cx="21" cy="21" r="7.500" fill="#4a86d0"/></svg></button>
        <button aria-label="Skype"><svg width="44" height="44" viewBox="0 0 44 44"><circle cx="22" cy="22" r="19.500" fill="#00aff0"/><circle cx="13" cy="13" r="12.500" fill="#00aff0"/><circle cx="31" cy="31" r="12.500" fill="#00aff0"/><text x="22" y="34" text-anchor="middle" class="skype">S</text></svg></button>
        <button aria-label="Spotify"><svg width="44" height="44" viewBox="0 0 44 44"><circle cx="22" cy="22" r="22" fill="#96b92a"/><path d="M8 15c9-3 21-2 29 3M10 23c8-2 17-1 24 3M11 30c7-2 14-1 20 2" fill="none" stroke="#111" stroke-width="4" stroke-linecap="round"/></svg></button>

        <div class="tray">
            <svg width="46" height="28" viewBox="0 0 46 28"><rect width="46" height="28" rx="2" fill="#fff"/><path d="M4 5h38v18H4z" fill="#111"/><path d="M6 9h34M6 14h34" stroke="#fff" stroke-width="4" stroke-dasharray="4 2"/><path d="M6 20h6M14 20h18M34 20h6" stroke="#fff" stroke-width="4"/></svg>
            <svg width="12" height="7" viewBox="0 0 12 7"><path d="M0 7h12L6 0z" fill="#fff"/></svg>
            <div class="tray-icons">
                <svg width="16" height="16" viewBox="0 0 16 16"><path d="M4 0l4 3-4 3-4-3zM11 0l4 3-4 3-3-3zM4 6l4 3-4 3-4-3zM11 6l4 3-4 3-3-3z" fill="#fff"/><circle cx="10" cy="11" r="4.800" fill="#38a050"/><path d="M8 11l2 2 3-4" fill="none" stroke="#fff" stroke-width="1.500"/></svg>
                <svg width="16" height="16" viewBox="0 0 16 16"><path d="M1 1v4M5 1v4M0 6h6v3H0zM3 8v7" fill="#fff" stroke="#fff" stroke-width="1.500"/><path d="M8 2h6v13H8z" fill="none" stroke="#fff" stroke-width="1.500"/><path d="M10 6h2v7h-2zM9 0h4v2H9z" fill="#fff"/></svg>
                <svg width="16" height="16" viewBox="0 0 16 16"><path d="M1 15v-3M4 15v-5M7 15V8M10 15V5M14 15V3" stroke="#fff" stroke-width="2"/></svg>
                <svg width="16" height="16" viewBox="0 0 16 16"><path d="M1 5h2l4-4v14l-4-4H1z" fill="#fff"/><path d="M9 5c1 2 1 4 0 6M11 3c3 3 3 7 0 10" fill="none" stroke="#fff" stroke-width="1.300"/></svg>
            </div>
            <div class="clock"><span>10:51</span><span>28.02.2015</span></div>
        </div>
    </footer>

    <!-- red highlight frames lying over the desktop -->
    <div class="mark mark-window"></div>
    <div class="mark mark-scroll"></div>
    <div class="mark mark-editor"></div>
    <div class="mark mark-tray"></div>

</body>
</html>
```

FILE: styles.css
```css
* {
    box-sizing: border-box;
}

body {
    margin: 0;
    height: 100vh;
    display: flex;
    flex-direction: column;
    overflow: hidden;
    position: relative;
    font-family: Verdana, "DejaVu Sans", sans-serif;
    font-size: 20px;
    color: #111;
}

button {
    padding: 0;
    border: none;
    background: none;
    font: inherit;
    color: inherit;
    display: flex;
    align-items: center;
    justify-content: center;
    flex: none;
}

input, select, textarea {
    font: inherit;
    color: inherit;
    border: none;
    outline: none;
    background: none;
    padding: 0;
    min-width: 0;
}

svg {
    flex: none;
    display: block;
}

a {
    color: inherit;
    text-decoration: none;
}

.defs {
    position: absolute;
    width: 0;
    height: 0;
}

.ico24 {
    width: 24px;
    height: 24px;
}

.ico22 {
    width: 22px;
    height: 22px;
}

/* browser chrome */
.browser {
    flex: none;
    font-family: "Liberation Sans", Arial, sans-serif;
    font-size: 16px;
    background: linear-gradient(#f7f7f7 44px, #eeeeee);
    border-bottom: 1px solid #999;
}

.titlebar {
    position: relative;
    display: flex;
    align-items: center;
    height: 45px;
    background: #6285ba;
    border-bottom: 1px solid #4c6c9e;
}

.tab-shape {
    position: absolute;
    left: 0;
    bottom: -1px;
    width: 356px;
    height: 42px;
}

.tab {
    position: relative;
    display: flex;
    align-items: center;
    gap: 9px;
    width: 272px;
    padding-left: 36px;
    margin-right: 36px;
    white-space: nowrap;
}

.tab-close {
    position: relative;
    margin-right: 34px;
}

.window-buttons {
    display: flex;
    align-self: flex-start;
    margin-left: auto;
    margin-right: 3px;
}

.window-buttons button {
    width: 26px;
    height: 19px;
}

.window-buttons .close {
    width: 45px;
    margin-left: 1px;
    background: #c75050;
}

.toolbar {
    display: flex;
    align-items: center;
    height: 61px;
    padding: 0 18px 0 6px;
}

.back {
    position: relative;
    width: 48px;
    height: 48px;
    border: 1px solid #aaa;
    border-radius: 50%;
    background: #f8f8f8;
}

.url, .search {
    display: flex;
    align-items: center;
    height: 34px;
    border: 1px solid #b4b8c0;
    background: #fff;
}

.url {
    flex: 1;
    margin-left: -8px;
    padding: 0 6px 0 12px;
    gap: 7px;
}

.url input {
    flex: 1;
    color: transparent;
    background: linear-gradient(to right, #888 39px, #111 39px, #111 163px, #888 163px);
    background-clip: text;
    -webkit-background-clip: text;
}

.search {
    width: 381px;
    margin: 0 19px 0 8px;
    padding: 0 6px;
    gap: 8px;
}

.search input {
    flex: 1;
    padding-left: 4px;
    font-style: italic;
}

.search input::placeholder {
    color: #666;
}

.g-logo {
    width: 24px;
    height: 24px;
    border-radius: 3px;
    background: #4a86ef;
    color: #fff;
    font-family: "Liberation Serif", serif;
    font-size: 26px;
    line-height: 18px;
    text-align: center;
}

.tools {
    display: flex;
    align-items: center;
    gap: 10px;
}

.tools .g1 {
    margin-left: 20px;
}

.tools .abp {
    gap: 4px;
    margin-left: 18px;
}

.tools .abp + .g1 {
    margin-left: 18px;
}

.thin {
    width: 1px;
    height: 24px;
    background: #ccc;
}

.tall {
    width: 1px;
    height: 52px;
    margin: 0 10px 0 6px;
    background: #bbb;
}

.abp-text {
    font: bold 10px "Liberation Sans", sans-serif;
    fill: #fff;
}

.bookmarks {
    display: flex;
    align-items: center;
    gap: 9px;
    height: 37px;
    padding: 0 5px;
    white-space: nowrap;
}

.bookmarks a {
    display: flex;
    align-items: center;
    gap: 8px;
}

.ilias {
    font: bold 8px "Liberation Sans", sans-serif;
    fill: #fff;
}

.dict {
    font: italic bold 22px "Liberation Sans", sans-serif;
    fill: #fff;
}

.no-icon {
    width: 22px;
    height: 22px;
    border: 2px dashed #999;
    border-radius: 3px;
}

/* forum page */
.viewport {
    flex: 1;
    min-height: 0;
    display: flex;
    overflow: hidden;
    background: linear-gradient(#2c3e50, #4a6a8b 156px, #6b9bcc 340px, #72a2d4 400px);
}

.page {
    flex: 1;
    margin-left: 130px;
    margin-right: 397px;
    background: #fff;
}

.sitenav {
    display: flex;
    justify-content: space-around;
    align-items: center;
    height: 38px;
    font-size: 18px;
    border-bottom: 1px solid #ddd;
    background: linear-gradient(#fff, #f2f2f2);
}

.drop {
    padding-right: 9px;
}

.drop::after {
    content: "";
    display: inline-block;
    margin-left: 6px;
    vertical-align: 3px;
    border: 6px solid transparent;
    border-top: 7px solid #555;
    border-bottom: none;
}

.content {
    padding: 33px 23px 0 24px;
}

.breadcrumb {
    height: 35px;
    padding-left: 8px;
    line-height: 35px;
    font-size: 18px;
    font-weight: bold;
    border: 1px solid #e2e2e2;
    background: #f6f6f6;
}

.breadcrumb i {
    margin: 0 2px;
    font-style: normal;
    color: #f26a21;
}

h1 {
    margin: 25px 0 10px;
    font-size: 23px;
    line-height: 32px;
}

.notice {
    display: flex;
    align-items: flex-start;
    gap: 20px;
    height: 186px;
    padding: 18px 20px 0 16px;
    border: 3px solid #ecec6a;
    border-radius: 20px;
    background: #ffffcc;
}

.notice svg {
    margin-top: 6px;
}

.notice-text {
    flex: 1;
}

.notice h2 {
    margin: 0 0 6px;
    font-size: 27px;
    line-height: 34px;
    text-align: center;
}

.notice p {
    margin: 0;
    line-height: 27px;
}

.notice a {
    color: #22229c;
    text-decoration: underline;
}

.notice ul {
    margin: 16px 0 0;
    padding-left: 50px;
    line-height: 27px;
}

.panel {
    margin-top: 20px;
    border: 1px solid #5d7795;
}

.panel h3 {
    margin: 0;
    padding-left: 16px;
    font-size: 18px;
    line-height: 37px;
    color: #fff;
    border: 1px solid #8fa6c4;
    background: linear-gradient(#124a87, #3272b4);
}

.panel-body {
    padding: 15px 24px 0;
}

.fields {
    padding: 0 9px;
}

.label {
    display: block;
    font-size: 22px;
    font-weight: bold;
    line-height: 31px;
}

.forum-link {
    display: block;
    margin-bottom: 16px;
    line-height: 27px;
    color: #22229c;
}

.title-input {
    display: block;
    width: 828px;
    height: 42px;
    padding: 2px 6px 0;
    font-size: 18px;
    border: 2px solid #aaaeae;
    border-radius: 5px;
}

.hint {
    margin: 2px 0 0;
    font-size: 18px;
    line-height: 22px;
}

hr {
    margin: 16px 0;
    border: none;
    border-top: 2px solid #e6e6e6;
}

.compose {
    display: flex;
    padding-left: 9px;
}

.editor {
    flex: 1;
    padding: 8px 10px 0 8px;
    border: 1px solid #ccc;
    background: #e8e8e8;
}

.row {
    display: flex;
    gap: 10px;
    height: 43px;
    margin-bottom: 8px;
}

.group {
    display: flex;
    align-items: center;
    padding: 0 3px;
    background: linear-gradient(#fff, #f8f8f8);
}

.group button {
    width: 40px;
    height: 36px;
}

.group .wide {
    width: 52px;
    gap: 5px;
}

.group .active {
    background: #a5d2f5;
}

.sep {
    width: 1px;
    height: 26px;
    margin: 0 3px;
    background: #ccc;
}

.faded svg {
    opacity: 0.6;
}

.pale svg {
    opacity: 0.35;
}

.tri {
    border: 5px solid transparent;
    border-top: 6px solid #333;
    border-bottom: none;
}

.combo {
    border: 1px solid #ddd;
    padding: 0 6px 0 11px;
    background: #fff;
}

.combo select {
    flex: 1;
    appearance: none;
    font-family: "Liberation Sans", Arial, sans-serif;
    font-size: 20px;
    font-style: italic;
    color: #777;
}

.font-combo {
    width: 153px;
}

.size-combo {
    width: 109px;
}

.knob {
    display: flex;
    align-items: center;
    justify-content: center;
    width: 28px;
    height: 32px;
    border: 1px solid #b8b0b0;
    border-radius: 4px;
    background: linear-gradient(#e0dada, #c8c0c0);
}

.knob::after {
    content: "";
    border: 6px solid transparent;
    border-top: 7px solid #666;
    border-bottom: none;
}

.letter, .letters, .script {
    font-family: "DejaVu Serif", serif;
    font-weight: bold;
    color: #4b4b50;
}

.group .letter {
    font-family: "DejaVu Serif", serif;
    font-size: 27px;
    font-weight: bold;
}

.group.letters button {
    font-family: "DejaVu Serif", serif;
    font-size: 24px;
    font-weight: bold;
}

.group .script {
    font-size: 21px;
}

.script small {
    font-family: "Liberation Sans", sans-serif;
    font-size: 14px;
    line-height: 16px;
    color: #8ab4e4;
}

.low small {
    align-self: flex-end;
}

.high small {
    align-self: flex-start;
    margin-top: 4px;
}

.a-small {
    font: bold 13px "DejaVu Serif", serif;
    fill: #222;
}

.a-grey {
    font: italic bold 19px "DejaVu Serif", serif;
    fill: #666;
}

.a-blue {
    font: italic bold 18px "DejaVu Serif", serif;
    fill: #1f48d8;
}

.word {
    font: bold 12px "Liberation Sans", sans-serif;
    fill: #667;
}

.php {
    font: italic bold 11px "Liberation Sans", sans-serif;
    fill: #333;
}

.writing {
    position: relative;
    display: flex;
    height: 440px;
}

.writing textarea {
    flex: 1;
    height: 440px;
    padding: 0 4px;
    line-height: 26px;
    resize: none;
    overflow: hidden;
    background: #fff;
    border-top: 1px solid #ccc;
    border-left: 1px solid #ccc;
}

.caret {
    position: absolute;
    left: 133px;
    top: 390px;
    width: 2px;
    height: 26px;
    background: #111;
}

.scrollbar {
    display: flex;
    flex-direction: column;
    align-items: center;
    flex: none;
    width: 16px;
    background: #f0f0f0;
}

.thumb {
    width: 100%;
    background: #cdcdcd;
}

.inner {
    padding-top: 6px;
}

.inner .thumb {
    height: 308px;
    margin: 81px 0 4px;
}

.outer {
    padding: 5px 0;
}

.outer .thumb {
    height: 423px;
    margin: 120px 0 auto;
}

.smileys {
    width: 150px;
    padding: 5px 0 0 18px;
}

.smiley-grid {
    display: grid;
    grid-template-columns: repeat(3, 25px);
    grid-auto-rows: 25px;
    gap: 15px;
}

.smiley-grid .king {
    width: 32px;
    height: 34px;
}

.smiley-grid .devil {
    width: 25px;
    height: 31px;
}

.more {
    margin-top: 18px;
    padding-left: 12px;
    font-size: 18px;
    line-height: 26px;
}

.more a {
    color: #22229c;
}

/* windows taskbar */
.taskbar {
    flex: none;
    display: flex;
    align-items: center;
    height: 56px;
    padding-right: 23px;
    background: #26375f;
}

.taskbar button {
    width: 84px;
    height: 56px;
}

.taskbar button:first-child {
    width: 70px;
}

.taskbar .current {
    width: 80px;
    height: 54px;
    margin: 0 2px;
    border: 1px solid #dde2ec;
    background: #7d88a3;
}

.skype {
    font: bold 32px "Liberation Sans", sans-serif;
    fill: #fff;
}

.tray {
    display: flex;
    align-items: center;
    gap: 16px;
    margin-left: auto;
    color: #fff;
}

.tray-icons {
    display: flex;
    gap: 8px;
    margin-right: 6px;
}

.clock {
    display: flex;
    flex-direction: column;
    align-items: center;
    padding-top: 6px;
    font-family: "Open Sans", sans-serif;
    font-size: 17px;
    line-height: 26px;
}

/* highlight frames */
.mark {
    position: absolute;
    border: 5px solid #dc2430;
}

.mark-window {
    top: -5px;
    right: -5px;
    width: 240px;
    height: 45px;
}

.mark-scroll {
    top: 139px;
    right: -5px;
    width: 49px;
    height: 608px;
}

.mark-editor {
    top: 963px;
    right: 602px;
    bottom: 37px;
    width: 49px;
}

.mark-tray {
    right: 2px;
    bottom: 1px;
    width: 353px;
    height: 64px;
}
```
